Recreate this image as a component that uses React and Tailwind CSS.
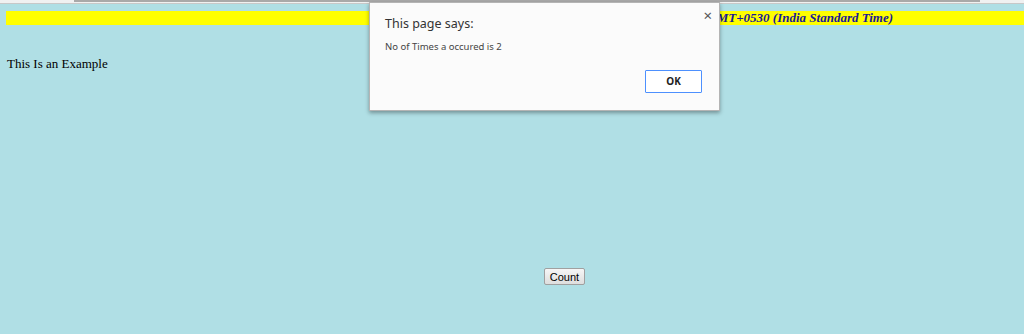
import React from 'react';

const AlertDialog = () => (
  <div className="absolute left-[369px] top-[2px] w-[351px] h-[109px] flex flex-col bg-[#fbfbfb] border border-[#b4b4b4] shadow-[0_2px_4px_rgba(0,0,0,0.35)] font-['Noto_Sans',sans-serif] text-[#333]">
    <div className="flex justify-between items-start pl-[15px] pr-[7px] pt-[5px]">
      <div className="pt-[8px] text-[12.5px] leading-[16px]">This page says:</div>
      <button className="text-[15px] leading-[15px] text-[#555]">×</button>
    </div>
    <div className="pl-[15px] pt-[9px] text-[9.5px] leading-[12px] text-[#444]">No of Times a occured is 2</div>
    <div className="flex justify-end pr-[17px] pt-[17px]">
      <button className="w-[57px] h-[23px] border border-[#4d90fe] bg-white text-[10px] font-bold text-[#222] rounded-[1px]">
        OK
      </button>
    </div>
  </div>
);

export default function App() {
  return (
    <div className="relative w-[1024px] h-[334px] overflow-hidden flex flex-col bg-[#b0dfe5] font-['Liberation_Serif',serif]">
      {/* browser chrome strip */}
      <div className="h-[4px] shrink-0 bg-[#f1f1f1] border-b border-[#c8c8c8] flex pl-[74px] pr-[44px]">
        <div className="flex-1 h-[2px] bg-[#a9a9a9]" />
      </div>

      <div className="mt-[7px] ml-[6px] h-[14px] shrink-0 bg-[#ffff00] flex justify-end items-center pr-[131px] overflow-hidden">
        <span className="whitespace-nowrap text-[13px] leading-[14px] font-bold italic text-[#1a1a96]">
          GMT+0530 (India Standard Time)
        </span>
      </div>

      <p className="mt-[31px] ml-[7px] text-[13px] leading-[16px] text-black">This Is an Example</p>

      <div className="mt-[196px] ml-[544px] flex">
        <button className="h-[17px] w-[41px] border border-[#a0a0a0] rounded-[2px] bg-gradient-to-b from-[#f6f6f6] to-[#dedede] text-[11px] leading-[14px] font-['Liberation_Sans',sans-serif] text-black">
          Count
        </button>
      </div>

      <AlertDialog />
    </div>
  );
}
